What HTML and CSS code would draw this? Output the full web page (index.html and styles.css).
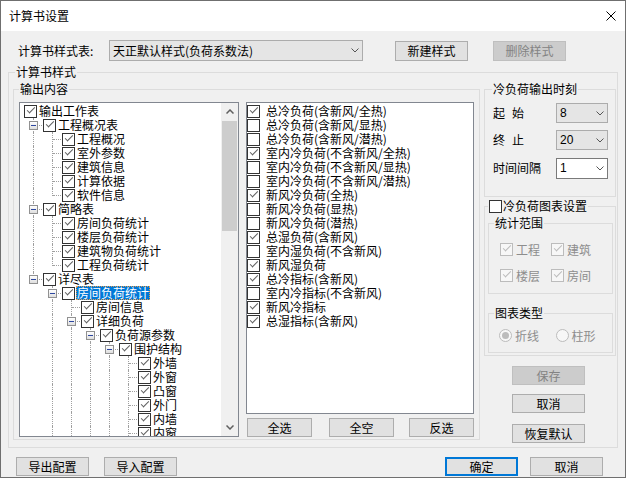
FILE: index.html
```html
<!DOCTYPE html>
<html lang="zh-CN">
<head>
<meta charset="utf-8">
<title>计算书设置</title>
<link rel="stylesheet" href="styles.css">
</head>
<body>
<div class="win">
  <div class="titlebar">
    <span class="ttl">计算书设置</span>
    <svg class="close" width="10" height="10" viewBox="0 0 10 10"><path d="M0.5 0.5L9.5 9.5M9.5 0.5L0.5 9.5" stroke="#000" stroke-width="1" fill="none"/></svg>
  </div>

  <div class="toprow">
    <span class="lbl">计算书样式表:</span>
    <div class="combo wide"><span>天正默认样式(负荷系数法)</span><svg class="chev" width="8" height="5" viewBox="0 0 8 5"><path d="M0.5 0.5L4 4L7.5 0.5" stroke="#555" fill="none"/></svg></div>
    <button class="btn b-new">新建样式</button>
    <button class="btn dis b-del">删除样式</button>
  </div>

  <div class="group outer">
    <span class="gt">计算书样式</span>

    <div class="group content">
      <span class="gt">输出内容</span>
      <div class="tree">
        <div class="tree-body">
          <div class="trow"><span class="cb on"></span><span class="tx">输出工作表</span></div>
          <div class="trow"><i class="c t"><b class="ex"></b></i><span class="cb on"></span><span class="tx">工程概况表</span></div>
          <div class="trow"><i class="c v"></i><i class="c t"></i><span class="cb on"></span><span class="tx">工程概况</span></div>
          <div class="trow"><i class="c v"></i><i class="c t"></i><span class="cb on"></span><span class="tx">室外参数</span></div>
          <div class="trow"><i class="c v"></i><i class="c t"></i><span class="cb on"></span><span class="tx">建筑信息</span></div>
          <div class="trow"><i class="c v"></i><i class="c t"></i><span class="cb on"></span><span class="tx">计算依据</span></div>
          <div class="trow"><i class="c v"></i><i class="c l"></i><span class="cb on"></span><span class="tx">软件信息</span></div>
          <div class="trow"><i class="c t"><b class="ex"></b></i><span class="cb on"></span><span class="tx">简略表</span></div>
          <div class="trow"><i class="c v"></i><i class="c t"></i><span class="cb on"></span><span class="tx">房间负荷统计</span></div>
          <div class="trow"><i class="c v"></i><i class="c t"></i><span class="cb on"></span><span class="tx">楼层负荷统计</span></div>
          <div class="trow"><i class="c v"></i><i class="c t"></i><span class="cb on"></span><span class="tx">建筑物负荷统计</span></div>
          <div class="trow"><i class="c v"></i><i class="c l"></i><span class="cb on"></span><span class="tx">工程负荷统计</span></div>
          <div class="trow"><i class="c l"><b class="ex"></b></i><span class="cb on"></span><span class="tx">详尽表</span></div>
          <div class="trow"><i class="c"></i><i class="c t"><b class="ex"></b></i><span class="cb on"></span><span class="tx sel">房间负荷统计</span></div>
          <div class="trow"><i class="c"></i><i class="c v"></i><i class="c t"></i><span class="cb on"></span><span class="tx">房间信息</span></div>
          <div class="trow"><i class="c"></i><i class="c v"></i><i class="c t"><b class="ex"></b></i><span class="cb on"></span><span class="tx">详细负荷</span></div>
          <div class="trow"><i class="c"></i><i class="c v"></i><i class="c v"></i><i class="c t"><b class="ex"></b></i><span class="cb on"></span><span class="tx">负荷源参数</span></div>
          <div class="trow"><i class="c"></i><i class="c v"></i><i class="c v"></i><i class="c v"></i><i class="c t"><b class="ex"></b></i><span class="cb on"></span><span class="tx">围护结构</span></div>
          <div class="trow"><i class="c"></i><i class="c v"></i><i class="c v"></i><i class="c v"></i><i class="c v"></i><i class="c t"></i><span class="cb on"></span><span class="tx">外墙</span></div>
          <div class="trow"><i class="c"></i><i class="c v"></i><i class="c v"></i><i class="c v"></i><i class="c v"></i><i class="c t"></i><span class="cb on"></span><span class="tx">外窗</span></div>
          <div class="trow"><i class="c"></i><i class="c v"></i><i class="c v"></i><i class="c v"></i><i class="c v"></i><i class="c t"></i><span class="cb on"></span><span class="tx">凸窗</span></div>
          <div class="trow"><i class="c"></i><i class="c v"></i><i class="c v"></i><i class="c v"></i><i class="c v"></i><i class="c t"></i><span class="cb on"></span><span class="tx">外门</span></div>
          <div class="trow"><i class="c"></i><i class="c v"></i><i class="c v"></i><i class="c v"></i><i class="c v"></i><i class="c t"></i><span class="cb on"></span><span class="tx">内墙</span></div>
          <div class="trow"><i class="c"></i><i class="c v"></i><i class="c v"></i><i class="c v"></i><i class="c v"></i><i class="c t"></i><span class="cb on"></span><span class="tx">内窗</span></div>
        </div>
        <div class="vscroll">
          <div class="arrow"><svg width="8" height="5" viewBox="0 0 8 5"><path d="M0.5 4.5L4 1L7.5 4.5" stroke="#606060" stroke-width="1.5" fill="none"/></svg></div>
          <div class="track"><div class="thumb"></div></div>
          <div class="arrow"><svg width="8" height="5" viewBox="0 0 8 5"><path d="M0.5 0.5L4 4L7.5 0.5" stroke="#606060" stroke-width="1.5" fill="none"/></svg></div>
        </div>
      </div>

      <div class="midcol">
        <div class="list">
          <div class="lrow"><span class="cb on"></span><span>总冷负荷(含新风/全热)</span></div>
          <div class="lrow"><span class="cb"></span><span>总冷负荷(含新风/显热)</span></div>
          <div class="lrow"><span class="cb"></span><span>总冷负荷(含新风/潜热)</span></div>
          <div class="lrow"><span class="cb on"></span><span>室内冷负荷(不含新风/全热)</span></div>
          <div class="lrow"><span class="cb"></span><span>室内冷负荷(不含新风/显热)</span></div>
          <div class="lrow"><span class="cb"></span><span>室内冷负荷(不含新风/潜热)</span></div>
          <div class="lrow"><span class="cb on"></span><span>新风冷负荷(全热)</span></div>
          <div class="lrow"><span class="cb"></span><span>新风冷负荷(显热)</span></div>
          <div class="lrow"><span class="cb"></span><span>新风冷负荷(潜热)</span></div>
          <div class="lrow"><span class="cb on"></span><span>总湿负荷(含新风)</span></div>
          <div class="lrow"><span class="cb"></span><span>室内湿负荷(不含新风)</span></div>
          <div class="lrow"><span class="cb on"></span><span>新风湿负荷</span></div>
          <div class="lrow"><span class="cb on"></span><span>总冷指标(含新风)</span></div>
          <div class="lrow"><span class="cb"></span><span>室内冷指标(不含新风)</span></div>
          <div class="lrow"><span class="cb on"></span><span>新风冷指标</span></div>
          <div class="lrow"><span class="cb on"></span><span>总湿指标(含新风)</span></div>
        </div>
        <div class="listbtns">
          <button class="btn lb">全选</button>
          <button class="btn lb lb2">全空</button>
          <button class="btn lb lb3">反选</button>
        </div>
      </div>
    </div>

    <div class="rcol">
      <div class="group ga">
        <span class="gt">冷负荷输出时刻</span>
        <div class="frow"><span class="flbl">起<span class="sp"></span>始</span><div class="combo sm"><span class="num">8</span><svg class="chev" width="8" height="5" viewBox="0 0 8 5"><path d="M0.5 0.5L4 4L7.5 0.5" stroke="#555" fill="none"/></svg></div></div>
        <div class="frow"><span class="flbl">终<span class="sp"></span>止</span><div class="combo sm"><span class="num">20</span><svg class="chev" width="8" height="5" viewBox="0 0 8 5"><path d="M0.5 0.5L4 4L7.5 0.5" stroke="#555" fill="none"/></svg></div></div>
        <div class="frow f3"><span class="flbl">时间间隔</span><div class="combo sm edit"><span class="num">1</span><svg class="chev" width="8" height="5" viewBox="0 0 8 5"><path d="M0.5 0.5L4 4L7.5 0.5" stroke="#555" fill="none"/></svg></div></div>
      </div>

      <div class="group gb">
        <span class="gt chk"><span class="cb"></span><span>冷负荷图表设置</span></span>
        <div class="group gs">
          <span class="gt">统计范围</span>
          <div class="ck-row"><span class="ck-item"><span class="cb dis on"></span>工程</span><span class="ck-item"><span class="cb dis on"></span>建筑</span></div>
          <div class="ck-row r2"><span class="ck-item"><span class="cb dis on"></span>楼层</span><span class="ck-item"><span class="cb dis on"></span>房间</span></div>
        </div>
        <div class="group gc">
          <span class="gt">图表类型</span>
          <div class="ck-row"><span class="rd-item"><span class="rd on"></span>折线</span><span class="rd-item"><span class="rd"></span>柱形</span></div>
        </div>
      </div>

      <button class="btn dis rbtn r1">保存</button>
      <button class="btn rbtn r2b">取消</button>
      <button class="btn rbtn r3b">恢复默认</button>
    </div>
  </div>

  <div class="footer">
    <button class="btn fb">导出配置</button>
    <button class="btn fb fb2">导入配置</button>
    <button class="btn fb ok">确定</button>
    <button class="btn fb cancel">取消</button>
  </div>
</div>
</body>
</html>
```

FILE: styles.css
```css
* { box-sizing: border-box; }
html, body { margin: 0; padding: 0; }
body {
  font-family: "Noto Sans CJK SC", "Microsoft YaHei", sans-serif;
  font-size: 12px;
  line-height: 14px;
  color: #000;
  background: #f0f0f0;
}
.win {
  width: 626px;
  height: 478px;
  border: 1px solid #6f6f6f;
  background: #f0f0f0;
  overflow: hidden;
  display: flex;
  flex-direction: column;
}
.titlebar {
  height: 30px;
  flex: none;
  background: #fff;
  display: flex;
  align-items: center;
  padding-left: 8px;
}
.close { margin-left: auto; margin-right: 9px; }

.toprow {
  display: flex;
  align-items: center;
  height: 21px;
  margin-top: 9px;
  padding-left: 17px;
  flex: none;
}
.lbl { width: 91px; }

.combo {
  height: 21px;
  border: 1px solid #acacac;
  background: #e5e5e5;
  display: flex;
  align-items: center;
  padding: 0 3px 0 3px;
  flex: none;
  white-space: nowrap;
}
.combo.wide { width: 254px; }
.combo .chev { margin-left: auto; flex: none; }
.combo.sm { width: 52px; height: 20px; }
.combo.edit { background: #fff; border-color: #7a7a7a; height: 21px; }
.num { font-family: "Liberation Sans", Arial, sans-serif; font-size: 12px; }

.btn {
  width: 73px;
  height: 20px;
  border: 1px solid #adadad;
  background: #e1e1e1;
  font: inherit;
  color: #000;
  padding: 0;
  margin: 0;
  display: flex;
  align-items: center;
  justify-content: center;
  flex: none;
}
.btn.dis { background: #cccccc; border-color: #bfbfbf; color: #838383; }
.b-new { margin-left: 32px; }
.b-del { margin-left: 25px; }

.group {
  border: 1px solid #dcdcdc;
  position: relative;
  flex: none;
}
.gt {
  position: absolute;
  top: -8px;
  line-height: 14px;
  height: 14px;
  padding: 0 1px;
  background: #f0f0f0;
  white-space: nowrap;
}

.outer {
  margin: 11px 0 0 7px;
  width: 610px;
  height: 376px;
  display: flex;
  align-items: flex-start;
  padding: 16px 0 0 4px;
}
.outer > .gt { left: 6px; }

.content {
  width: 467px;
  height: 351px;
  padding: 12px 5px 0 5px;
  display: flex;
  gap: 7px;
}
.content > .gt { left: 5px; }

/* tree */
.tree {
  width: 220px;
  height: 335px;
  border: 1px solid #828790;
  background: #fff;
  display: flex;
  flex: none;
}
.tree-body {
  flex: 1;
  overflow: hidden;
  padding: 1px 0 0 4px;
}
.trow {
  height: 14px;
  display: flex;
  align-items: center;
  white-space: nowrap;
}
.trow .cb { margin-right: 2px; }
.tx { line-height: 14px; height: 14px; }
.tx.sel {
  background: #0078d7;
  color: #fff;
  outline: 1px dotted #e89a4a;
  outline-offset: -1px;
  padding: 0 1px;
  margin-left: -1px;
}
.c {
  width: 19px;
  height: 14px;
  position: relative;
  flex: none;
  display: block;
}
.c.v::before, .c.t::before, .c.l::before {
  content: "";
  position: absolute;
  left: 9px;
  top: 0;
  bottom: 0;
  border-left: 1px dotted #a0a0a0;
}
.c.l::before { bottom: auto; height: 8px; }
.c.t::after, .c.l::after {
  content: "";
  position: absolute;
  left: 10px;
  right: 1px;
  top: 7px;
  border-top: 1px dotted #a0a0a0;
}
.ex {
  position: absolute;
  left: 5px;
  top: 3px;
  width: 9px;
  height: 9px;
  border: 1px solid #919191;
  background: linear-gradient(#ffffff, #dedede);
  z-index: 1;
}
.ex::after {
  content: "";
  position: absolute;
  left: 1px;
  top: 3px;
  width: 5px;
  height: 1px;
  background: #2d47a0;
}
.vscroll {
  width: 17px;
  flex: none;
  display: flex;
  flex-direction: column;
  background: #f0f0f0;
}
.arrow {
  height: 17px;
  flex: none;
  display: flex;
  align-items: center;
  justify-content: center;
}
.track { flex: 1; padding: 1px 1px 0 1px; }
.thumb { height: 110px; background: #cdcdcd; }

/* checkboxes */
.cb {
  width: 13px;
  height: 13px;
  border: 1px solid #333;
  background: #fff;
  position: relative;
  flex: none;
  display: inline-block;
}
.cb.on::after {
  content: "";
  box-sizing: content-box;
  position: absolute;
  left: 4px;
  top: -1px;
  width: 2.5px;
  height: 7px;
  border: solid #5f5f5f;
  border-width: 0 1.4px 1.4px 0;
  transform: rotate(45deg);
}
.cb.dis { border-color: #bcbcbc; background: #f7f7f7; }
.cb.dis.on::after { border-color: #bcbcbc; }

/* middle list */
.midcol { width: 228px; display: flex; flex-direction: column; flex: none; }
.list {
  height: 312px;
  border: 1px solid #828790;
  background: #fff;
  padding-top: 1px;
}
.lrow {
  height: 14px;
  display: flex;
  align-items: center;
  gap: 6px;
  white-space: nowrap;
}
.listbtns { display: flex; margin-top: 4px; padding-left: 1px; }
.lb { width: 65px; height: 19px; }
.lb2 { margin-left: 17px; }
.lb3 { margin-left: 15px; }

/* right column */
.rcol {
  width: 132px;
  margin-left: 4px;
  display: flex;
  flex-direction: column;
  flex: none;
}
.ga {
  height: 108px;
  padding: 13px 0 0 8px;
}
.ga > .gt { left: 7px; }
.frow { display: flex; align-items: center; height: 20px; }
.frow + .frow { margin-top: 7px; }
.frow.f3 { margin-top: 8px; }
.flbl { width: 63px; display: flex; align-items: center; }
.sp { display: inline-block; width: 7px; }

.gb {
  margin-top: 9px;
  height: 150px;
  padding: 16px 0 0 3px;
}
.gt.chk {
  left: 3px;
  display: flex;
  align-items: center;
  gap: 1px;
}
.gs {
  width: 125px;
  height: 71px;
  padding: 19px 0 0 11px;
}
.gs > .gt, .gc > .gt { left: 5px; }
.ck-row { display: flex; align-items: center; height: 13px; }
.ck-row.r2 { margin-top: 13px; }
.ck-item {
  width: 51px;
  display: flex;
  align-items: center;
  gap: 3px;
  color: #8d8d8d;
  white-space: nowrap;
}
.gc {
  margin-top: 19px;
  width: 125px;
  height: 40px;
  padding: 15px 0 0 10px;
}
.rd-item {
  width: 57px;
  display: flex;
  align-items: center;
  gap: 3px;
  color: #8d8d8d;
  white-space: nowrap;
}
.rd {
  width: 13px;
  height: 13px;
  border-radius: 50%;
  border: 1px solid #bcbcbc;
  background: #f7f7f7;
  position: relative;
  flex: none;
}
.rd.on::after {
  content: "";
  position: absolute;
  left: 2px;
  top: 2px;
  width: 7px;
  height: 7px;
  border-radius: 50%;
  background: #bcbcbc;
}
.rbtn { margin-left: 28px; height: 19px; }
.rbtn.r1 { margin-top: 10px; }
.rbtn.r2b { margin-top: 9px; }
.rbtn.r3b { margin-top: 11px; }

/* footer */
.footer {
  display: flex;
  margin-top: 9px;
  padding-left: 15px;
  flex: none;
}
.fb { height: 19px; }
.fb2 { margin-left: 15px; }
.ok { margin-left: 268px; border: 2px solid #0078d7; }
.cancel { margin-left: 12px; }
```
